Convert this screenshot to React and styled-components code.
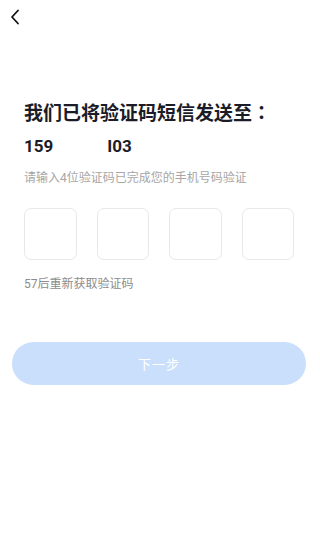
import styled, { createGlobalStyle } from 'styled-components';

const GlobalStyle = createGlobalStyle`
    html, body {
        margin: 0;
        padding: 0;
        background: #ffffff;
        font-family: Roboto, "Noto Sans CJK SC", sans-serif;
    }
`;

const Page = styled.div`
    width: 320px;
    height: 544px;
    background: #fff;
    display: flex;
    flex-direction: column;
`;

const TopBar = styled.div`
    height: 34px;
    display: flex;
    align-items: center;
    padding-left: 8px;
`;

const BackButton = styled.button`
    border: none;
    background: none;
    padding: 0;
    width: 14px;
    height: 18px;
    display: flex;
    align-items: center;
    justify-content: center;
`;

const Content = styled.div`
    padding: 0 26px 0 24px;
    display: flex;
    flex-direction: column;
`;

const Title = styled.h1`
    margin: 64px 0 0 0;
    font-family: "Noto Sans CJK SC", sans-serif;
    font-size: 19px;
    line-height: 28px;
    font-weight: 700;
    color: #1c1c28;
    white-space: nowrap;
`;

// centred full-width colon, as in the original
const Colon = styled.span`
    font-family: "Noto Sans CJK TC", sans-serif;
`;

const Phone = styled.div`
    margin-top: 8px;
    font-size: 17px;
    line-height: 24px;
    font-weight: 700;
    color: #1c1c28;
    display: flex;
    gap: 54px;
`;

const Hint = styled.p`
    margin: 11px 0 0 0;
    font-size: 12px;
    line-height: 18px;
    color: #a6a6a6;
`;

const CodeRow = styled.div`
    margin-top: 21px;
    display: grid;
    grid-template-columns: repeat(4, 1fr);
    gap: 20px;
`;

const CodeBox = styled.div`
    height: 52px;
    box-sizing: border-box;
    border: 1px solid #e8e8e8;
    border-radius: 7px;
    background: #fff;
`;

const Timer = styled.p`
    margin: 15px 0 0 0;
    font-size: 12px;
    line-height: 18px;
    color: #8c8c8c;
`;

const Footer = styled.div`
    padding: 0 14px 0 12px;
    margin-top: 49px;
`;

const NextButton = styled.button`
    width: 100%;
    height: 43px;
    border: none;
    border-radius: 22px;
    background: ${props => props.disabled ? '#cadffc' : '#3b82f6'};
    color: #fff;
    font-family: "Noto Sans CJK SC", sans-serif;
    font-size: 13px;
    letter-spacing: 1px;
`;

const App = () => {
    return (
        <>
            <GlobalStyle />
            <Page>
                <TopBar>
                    <BackButton type='button'>
                        <svg width="10" height="16" viewBox="0 0 10 16">
                            <path d="M8 1.5 L2 8 L8 14.5" fill="none" stroke="#111" strokeWidth="1.8" strokeLinecap="round" strokeLinejoin="round" />
                        </svg>
                    </BackButton>
                </TopBar>
                <Content>
                    <Title>我们已将验证码短信发送至<Colon>：</Colon></Title>
                    <Phone>
                        <span>159</span>
                        <span>I03</span>
                    </Phone>
                    <Hint>请输入4位验证码已完成您的手机号码验证</Hint>
                    <CodeRow>
                        {[0, 1, 2, 3].map(i => <CodeBox key={i} />)}
                    </CodeRow>
                    <Timer>57后重新获取验证码</Timer>
                </Content>
                <Footer>
                    <NextButton type='button' disabled>下一步</NextButton>
                </Footer>
            </Page>
        </>
    );
}

export default App;
